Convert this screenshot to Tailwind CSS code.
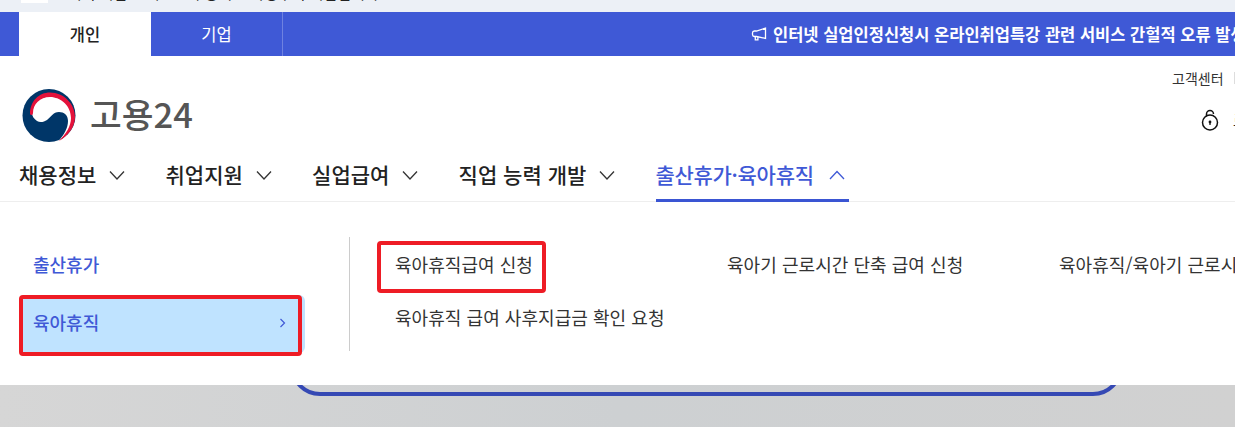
<!DOCTYPE html>
<html lang="ko">
<head>
<meta charset="utf-8">
<script src="https://cdn.jsdelivr.net/npm/@tailwindcss/browser@4"></script>
</head>
<body class="h-[427px] w-[1235px] overflow-hidden bg-white font-['Noto_Sans_CJK_KR','Noto_Sans',sans-serif] text-[#222]">
<div class="flex h-[427px] flex-col">
  <!-- gov strip -->
  <div class="flex h-3 shrink-0 items-end overflow-hidden bg-[#ecf0f6] pl-[21px]">
    <div class="flex h-5 shrink-0 items-end gap-5 pb-[9px]">
      <span class="h-[14px] w-[27px] bg-white"></span>
      <span class="text-[15px] leading-5 whitespace-nowrap text-[#222]">이 누리집은 대한민국 공식 전자정부 누리집입니다.</span>
    </div>
  </div>
  <!-- tabs / notice -->
  <div class="flex h-11 shrink-0 overflow-hidden bg-[#3f59d6] pl-[19px]">
    <div class="flex w-[132px] shrink-0 items-center justify-center bg-white text-[16.5px] font-medium text-[#222]">개인</div>
    <div class="flex w-[132px] shrink-0 items-center justify-center border-r border-white/25 text-[16.5px] text-white">기업</div>
    <div class="flex items-center gap-[6px] pl-[468px] text-[16.5px] font-semibold whitespace-nowrap text-white">
      <svg class="h-4 w-4 shrink-0" viewBox="0 0 16 16" fill="none" stroke="white" stroke-width="1.3"><path d="M14.5 2.2v10.2L5.5 10.5H3.4a2 2 0 0 1-1.9-2V7a2 2 0 0 1 1.9-2h2.1z"/><path d="M4.3 10.5v3.3h2.6v-2.8"/></svg>
      <span>인터넷 실업인정신청시 온라인취업특강 관련 서비스 간헐적 오류 발생 안내</span>
    </div>
  </div>
  <!-- logo row -->
  <div class="flex h-[99px] shrink-0 justify-between pl-[22px]">
    <div class="flex items-start gap-[13px] pt-[33px]">
      <svg class="h-[53px] w-[55px] shrink-0" viewBox="0 0 55 53">
        <circle cx="27" cy="26.5" r="26.5" fill="#003668"/>
        <path d="M10 24C10 14 18 7.5 28 7.5C40 7.5 50 17 50 29C50 38 44 47 37 51.5C42 46 46 39 46 32C46 26 42 23 37 23C31 23 29 28 25 31C22 33 18 34 15 32C12 30 10 27 10 24Z" fill="#fff"/>
        <path d="M8 25C8 12 17 3.5 28 3.5C42 3.5 53 15 53 28C53 38 46 47 37 52C44 45 49 37 49 29C49 17 39 8 28 8C18 8 11 15 11 24C11 26 9 27 8 25Z" fill="#e4123b"/>
      </svg>
      <span class="mt-[4px] text-[34.5px] leading-[40px] font-medium text-[#555]">고용24</span>
    </div>
    <div class="flex w-[63px] shrink-0 flex-col items-start overflow-hidden">
      <div class="mt-[14px] flex h-4 w-[63px] items-center justify-between">
        <span class="text-[14px] leading-4 whitespace-nowrap text-[#333]">고객센터</span>
        <span class="h-3 w-px shrink-0 bg-[#ddd]"></span>
      </div>
      <div class="mt-[22px] flex items-center gap-[13px] pl-[28px]">
        <svg class="h-6 w-5 shrink-0" viewBox="0 0 20 24" fill="none" stroke="#111" stroke-width="1.5"><circle cx="10" cy="14.5" r="7.5"/><path d="M6.5 8.5V6a3.5 3.5 0 0 1 7 0"/><circle cx="10" cy="14" r="1.4" fill="#111" stroke="none"/><path d="M10 14v3" stroke-width="1.3"/></svg>
        <span class="text-[15px] whitespace-nowrap text-[#222]">로그인</span>
      </div>
    </div>
  </div>
  <!-- nav -->
  <nav class="flex h-[47px] shrink-0 gap-[40.25px] border-b border-[#eee] pl-[19px] text-[21px] font-medium">
    <div class="flex h-[47px] items-start gap-[13px] pt-[5px]"><span class="leading-[28px]">채용정보</span><svg class="mt-[7px] h-4 w-4" viewBox="0 0 16 16" fill="none" stroke="#333" stroke-width="1.3"><path d="M1 4.5l7 7.5 7-7.5"/></svg></div>
    <div class="flex h-[47px] items-start gap-[13px] pt-[5px]"><span class="leading-[28px]">취업지원</span><svg class="mt-[7px] h-4 w-4" viewBox="0 0 16 16" fill="none" stroke="#333" stroke-width="1.3"><path d="M1 4.5l7 7.5 7-7.5"/></svg></div>
    <div class="flex h-[47px] items-start gap-[13px] pt-[5px]"><span class="leading-[28px]">실업급여</span><svg class="mt-[7px] h-4 w-4" viewBox="0 0 16 16" fill="none" stroke="#333" stroke-width="1.3"><path d="M1 4.5l7 7.5 7-7.5"/></svg></div>
    <div class="flex h-[47px] items-start gap-[13px] pt-[5px]"><span class="leading-[28px]">직업 능력 개발</span><svg class="mt-[7px] h-4 w-4" viewBox="0 0 16 16" fill="none" stroke="#333" stroke-width="1.3"><path d="M1 4.5l7 7.5 7-7.5"/></svg></div>
    <div class="flex h-[47px] items-start gap-[15px] border-b-[3px] border-[#3a55d3] pt-[5px] pr-[4px] text-[#3f59d6]"><span class="leading-[28px] tracking-[-0.3px]">출산휴가·육아휴직</span><svg class="mt-[7px] h-4 w-4" viewBox="0 0 16 16" fill="none" stroke="#3f59d6" stroke-width="1.3"><path d="M1 12l7-7.5 7 7.5"/></svg></div>
  </nav>
  <!-- dropdown panel -->
  <div class="flex h-[183px] shrink-0 bg-white pt-[35px] pl-[19px]">
    <div class="flex w-[286px] shrink-0 flex-col">
      <div class="flex h-[58px] items-center pb-[3px] pl-[14px] text-[18px] font-medium text-[#3f59d6]">출산휴가</div>
      <div class="relative flex h-[58px] items-center justify-between rounded-md bg-[#bfe3ff] pr-[18px] pb-[3px] pl-[14px] text-[18px] font-medium text-[#3f59d6]">
        <span>육아휴직</span>
        <svg class="h-[10px] w-2" viewBox="0 0 8 10" fill="none" stroke="#3f59d6" stroke-width="1.2"><path d="M1.5 1l4 4-4 4"/></svg>
        <div class="absolute top-[0px] left-0 h-[61px] w-[283px] rounded-sm border-4 border-[#ee1c25]"></div>
      </div>
    </div>
    <div class="ml-[44px] h-[114px] w-px shrink-0 bg-[#ccc]"></div>
    <div class="ml-[45px] grid h-min grid-cols-[332px_332px_332px] text-[18px] leading-[24px] tracking-[0.05px] whitespace-nowrap text-[#333]">
      <div class="flex h-[53px] items-center">육아휴직급여 신청</div>
      <div class="flex h-[53px] items-center">육아기 근로시간 단축 급여 신청</div>
      <div class="flex h-[53px] items-center">육아휴직/육아기 근로시간 단축 급여 신청</div>
      <div class="flex h-[53px] items-center">육아휴직 급여 사후지급금 확인 요청</div>
    </div>
  </div>
  <!-- dimmed page beneath -->
  <div class="relative min-h-0 flex-1 overflow-hidden bg-linear-to-r from-[#d6d6d6] via-[#cdd0d2] to-[#d1d1d1] pl-[290px]">
    <div class="-mt-[60px] h-[71px] w-[833px] rounded-[30px] border-4 border-[#3549b4]"></div>
  </div>
</div>
<div class="pointer-events-none absolute top-[241px] left-[377px] h-[52px] w-[169px] rounded-sm border-4 border-[#ee1c25]"></div>
</body>
</html>
